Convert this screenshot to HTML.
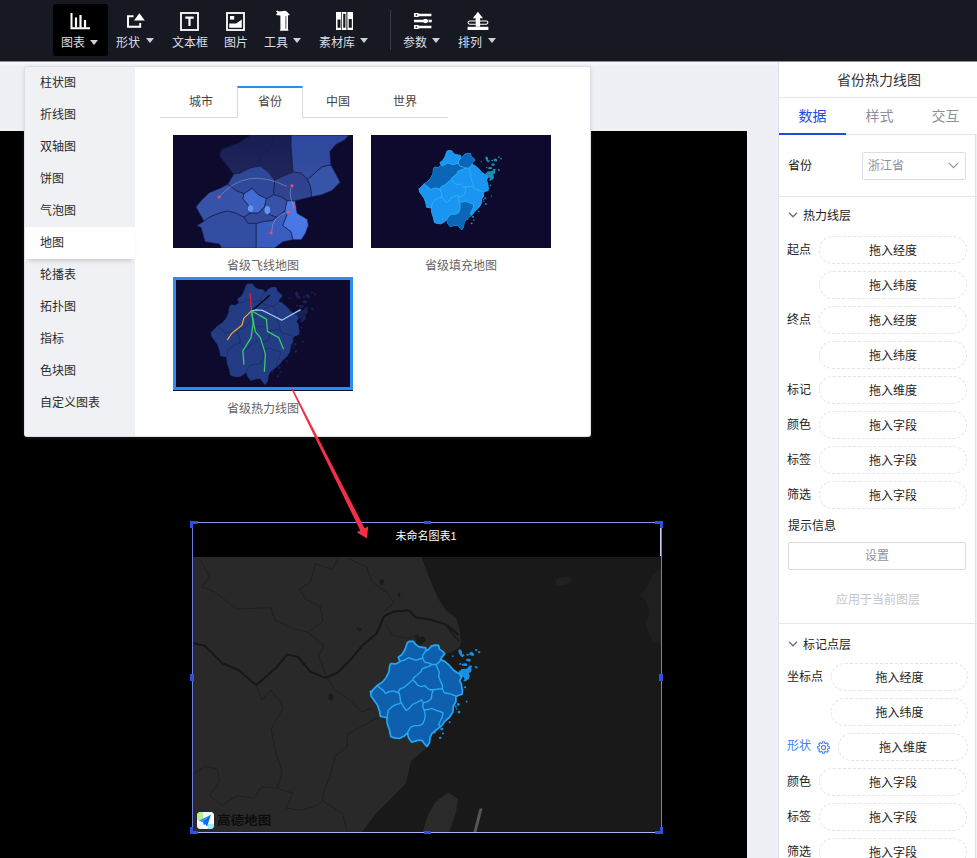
<!DOCTYPE html>
<html lang="zh-CN">
<head>
<meta charset="utf-8">
<title>省份热力线图</title>
<style>
*{box-sizing:border-box;margin:0;padding:0}
html,body{width:977px;height:858px;overflow:hidden}
body{position:relative;background:#eff0f5;font-family:"Liberation Sans","Noto Sans CJK SC",sans-serif;font-size:12px;color:#333;line-height:1}
.abs{position:absolute}
/* toolbar */
#toolbar{position:absolute;left:0;top:0;width:977px;height:61px;background:#161822;z-index:5}
.tb-sel{position:absolute;left:53px;top:4px;width:55px;height:52px;background:#000;border-radius:3px}
.tbi{position:absolute;top:0;height:61px;color:#dddee3;font-size:12px;white-space:nowrap}
.tbi .lbl{position:absolute;top:36px;left:0;line-height:14px;height:14px}
.tbi .car{position:absolute;top:38px;width:0;height:0;border-left:4px solid transparent;border-right:4px solid transparent;border-top:5px solid #cfd1d6}
#toolbar>svg{position:absolute}
.tb-sep{position:absolute;left:390px;top:10px;width:1px;height:40px;background:#3a3c47}
/* canvas */
#canvas{position:absolute;left:0;top:131px;width:747px;height:727px;background:#000}
/* popup */
#popup{position:absolute;left:25px;top:67px;width:565px;height:369px;background:#fff;border-radius:2px;box-shadow:0 0 0 1px #dfe0e5,0 1px 4px rgba(120,120,130,.35);z-index:4;overflow:hidden}
#menu{position:absolute;left:0;top:0;width:110px;height:370px;background:#f0f1f5}
#menu .mi{position:absolute;left:0;width:110px;height:32px;line-height:33px;padding-left:15px;font-size:12px;color:#2b2b2b}
#menu .mi.on{background:#fff;box-shadow:0 4px 5px -3px rgba(0,0,0,.22)}
.ptab{position:absolute;top:27px;height:18px;line-height:18px;font-size:12px;color:#444;width:60px;text-align:center}
.cap{position:absolute;font-size:12px;color:#666;width:180px;text-align:center;line-height:14px}
/* right panel */
#panel{position:absolute;left:778px;top:61px;width:199px;height:797px;background:#fff;border-left:1px solid #e1e3ec}
#panel .ttl{position:absolute;left:0;top:0;padding-left:2px;width:198px;height:37px;line-height:39px;text-align:center;font-size:14px;color:#333;border-bottom:1px solid #e4e6ee}
#panel .tab{position:absolute;top:37px;height:36px;line-height:37px;text-align:center;font-size:14px;color:#8a8f99;width:67px}
#panel .tab.on{color:#2449e0}
.lab{position:absolute;left:8px;margin-top:0;font-size:12px;line-height:14px;color:#222;white-space:nowrap}
.pill{position:absolute;height:28px;border:1px dashed #e2e3eb;border-radius:14px;text-align:center;line-height:28px;font-size:12px;color:#222}
.hr{position:absolute;left:0;width:198px;height:1px;background:#e4e6ee}
.sec{position:absolute;left:24px;font-size:12px;line-height:14px;color:#222}
.chev{position:absolute;left:9px;margin-top:-1px;width:10px;height:6px}
.hd{position:absolute;background:#2f4fe6}
</style>
</head>
<body>
<!--DEFS0--><svg width="0" height="0" style="position:absolute"><defs>
<path id="zjo" d="M371.4 692.7 L372.4 690.3 L377.3 685.4 L382.2 682.3 L385.9 678.0 L389.0 671.8 L389.6 666.3 L390.8 663.5 L395.7 663.9 L400.0 661.4 L398.2 657.1 L401.8 654.7 L404.9 649.7 L407.4 642.4 L409.2 641.4 L413.5 641.4 L415.4 644.2 L418.4 646.7 L422.7 647.3 L425.8 647.9 L425.8 651.0 L428.9 649.1 L431.3 646.1 L435.0 645.1 L438.7 645.4 L439.3 649.1 L443.0 651.6 L444.8 654.0 L441.8 657.1 L440.5 659.6 L444.8 661.4 L449.7 665.7 L453.4 670.0 L457.1 672.5 L460.2 674.3 L461.4 677.4 L459.6 680.4 L461.4 684.1 L462.0 689.0 L462.6 690.0 L462.0 694.3 L458.3 695.5 L455.9 696.8 L455.9 701.7 L453.4 706.0 L452.8 712.1 L449.7 717.0 L444.8 721.3 L441.8 725.6 L438.7 728.1 L435.6 730.5 L431.9 733.6 L430.1 737.3 L429.5 742.8 L427.0 746.5 L424.6 744.0 L422.1 740.4 L417.8 740.4 L411.7 742.2 L408.6 737.9 L407.4 733.0 L404.3 736.1 L399.4 738.5 L394.5 737.9 L390.8 736.7 L389.6 730.5 L387.1 723.2 L386.9 717.6 L383.4 717.0 L380.4 716.4 L379.5 710.9 L377.3 704.7 L374.2 700.4 L371.1 696.1 L370.5 691.2Z"/>
<path id="zji" d="M400.0 661.4 L404.3 660.2 L408.6 657.7 L412.3 659.0 L416.0 660.2 L419.7 659.0 L422.7 658.3 M422.7 658.3 L422.7 655.3 L425.8 651.0 M422.7 658.3 L424.6 662.0 L428.9 663.2 L431.9 664.5 L436.2 664.5 L439.9 661.4 L440.5 659.6 M431.9 664.5 L428.9 666.3 L425.2 667.5 L422.1 668.8 L420.9 671.8 L416.6 675.5 L413.5 678.0 L412.9 679.8 M436.2 664.5 L437.5 668.2 L439.3 671.8 L438.7 676.8 L440.5 681.1 L442.4 685.4 L442.4 689.0 M412.9 679.8 L415.4 682.3 L417.8 685.4 L421.5 686.6 L424.6 685.4 L427.0 687.8 L429.5 689.7 L433.8 689.7 L438.7 689.0 L442.4 689.0 M442.4 689.0 L444.2 692.7 L449.7 693.7 L455.9 696.1 M377.3 685.4 L379.7 687.8 L383.4 690.3 L385.3 693.3 L389.6 691.5 L393.9 690.9 L397.5 692.7 L400.0 689.0 L404.3 687.2 L408.6 683.5 L412.9 679.8 M397.5 692.7 L398.8 692.5 L400.0 696.8 L400.6 701.7 L400.0 703.5 L395.7 704.7 L391.4 707.2 L388.3 710.3 L386.9 717.6 M400.6 701.7 L403.1 706.0 L406.1 710.3 L409.2 708.4 L412.9 704.1 L417.2 702.3 L421.5 699.8 L423.3 702.9 M429.5 689.7 L433.2 690.0 L431.9 693.7 L431.3 698.6 L427.6 701.7 L423.3 702.9 M423.3 702.9 L422.7 706.6 L424.0 709.7 L427.6 709.7 L431.9 708.4 L436.2 710.3 L439.9 711.5 L443.0 712.7 L442.4 716.4 L440.5 720.7 L438.7 724.4 L439.9 726.8 M424.0 709.7 L425.2 714.6 L424.6 719.5 L422.7 723.8 L419.0 725.6 L414.7 725.6 L411.1 726.8 L408.6 730.5 L407.4 733.0"/>
<g id="zjs"><ellipse cx="460.2" cy="651.6" rx="1.6" ry="2.4" transform="rotate(-35 460.2 651.6)"/><ellipse cx="463.3" cy="655.3" rx="1.1" ry="1.0" transform="rotate(0 463.3 655.3)"/><ellipse cx="467.6" cy="654.7" rx="1.3" ry="1.0" transform="rotate(0 467.6 654.7)"/><ellipse cx="471.9" cy="653.4" rx="2.0" ry="1.2" transform="rotate(30 471.9 653.4)"/><ellipse cx="476.2" cy="650.0" rx="1.3" ry="0.9" transform="rotate(0 476.2 650.0)"/><ellipse cx="479.2" cy="652.2" rx="1.3" ry="1.0" transform="rotate(30 479.2 652.2)"/><ellipse cx="468.8" cy="660.2" rx="1.9" ry="1.3" transform="rotate(20 468.8 660.2)"/><ellipse cx="465.1" cy="664.5" rx="2.2" ry="1.2" transform="rotate(0 465.1 664.5)"/><ellipse cx="460.2" cy="663.9" rx="1.0" ry="0.9" transform="rotate(0 460.2 663.9)"/><ellipse cx="463.3" cy="670.6" rx="2.8" ry="1.6" transform="rotate(10 463.3 670.6)"/><ellipse cx="467.6" cy="671.8" rx="1.7" ry="2.7" transform="rotate(0 467.6 671.8)"/><ellipse cx="462.0" cy="675.5" rx="2.2" ry="1.3" transform="rotate(-20 462.0 675.5)"/><ellipse cx="465.7" cy="679.8" rx="2.5" ry="1.2" transform="rotate(-30 465.7 679.8)"/><ellipse cx="460.2" cy="671.8" rx="1.4" ry="1.2" transform="rotate(0 460.2 671.8)"/><ellipse cx="476.2" cy="667.2" rx="1.6" ry="1.0" transform="rotate(30 476.2 667.2)"/><ellipse cx="470.6" cy="666.3" rx="1.7" ry="0.8" transform="rotate(10 470.6 666.3)"/><ellipse cx="452.8" cy="656.1" rx="0.8" ry="0.9" transform="rotate(0 452.8 656.1)"/><ellipse cx="465.1" cy="687.2" rx="1.1" ry="1.0" transform="rotate(0 465.1 687.2)"/><ellipse cx="459.6" cy="677.4" rx="1.3" ry="1.5" transform="rotate(0 459.6 677.4)"/><ellipse cx="458.3" cy="704.5" rx="1.4" ry="1.4"/><ellipse cx="455.9" cy="706.6" rx="1.0" ry="1.0"/><ellipse cx="459.0" cy="712.1" rx="1.4" ry="1.4"/><ellipse cx="466.7" cy="701.7" rx="0.9" ry="0.9"/><ellipse cx="449.7" cy="722.2" rx="1.0" ry="1.0"/><ellipse cx="439.9" cy="725.0" rx="1.4" ry="1.4"/><ellipse cx="441.8" cy="729.1" rx="1.6" ry="1.3"/><ellipse cx="443.0" cy="733.6" rx="1.1" ry="1.0"/><ellipse cx="440.2" cy="737.9" rx="1.3" ry="1.1"/><ellipse cx="435.0" cy="732.7" rx="1.0" ry="0.8"/><ellipse cx="456.5" cy="709.0" rx="0.8" ry="0.8"/><ellipse cx="464.2" cy="671.4" rx="4.9" ry="2.3" transform="rotate(-20 464.2 671.4)"/><ellipse cx="466.7" cy="676.3" rx="2.9" ry="3.6" transform="rotate(0 466.7 676.3)"/><ellipse cx="461" cy="654.3" rx="1.3" ry="3.3" transform="rotate(-35 461 654.3)"/><ellipse cx="471.6" cy="654.3" rx="2.6" ry="1.3" transform="rotate(20 471.6 654.3)"/><ellipse cx="468.3" cy="660" rx="2.3" ry="1.3" transform="rotate(0 468.3 660)"/><ellipse cx="464.2" cy="664.9" rx="2.9" ry="1.0" transform="rotate(10 464.2 664.9)"/><ellipse cx="462.8" cy="674.5" rx="3" ry="2.8" transform="rotate(0 462.8 674.5)"/><ellipse cx="469.5" cy="669.5" rx="2" ry="3.2" transform="rotate(0 469.5 669.5)"/></g>
</defs></svg><!--DEFS1-->
<!-- TOOLBAR -->
<div id="toolbar">
  <div class="tb-sel"></div>
  <div class="tbi" style="left:61px"><span class="lbl">图表</span><i class="car" style="left:29px;top:40px"></i></div>
  <div class="tbi" style="left:116px"><span class="lbl">形状</span><i class="car" style="left:30px"></i></div>
  <div class="tbi" style="left:172px"><span class="lbl">文本框</span></div>
  <div class="tbi" style="left:224px"><span class="lbl">图片</span></div>
  <div class="tbi" style="left:264px"><span class="lbl">工具</span><i class="car" style="left:29px"></i></div>
  <div class="tbi" style="left:319px"><span class="lbl">素材库</span><i class="car" style="left:41px"></i></div>
  <div class="tb-sep"></div>
  <div class="tbi" style="left:403px"><span class="lbl">参数</span><i class="car" style="left:29px"></i></div>
  <div class="tbi" style="left:458px"><span class="lbl">排列</span><i class="car" style="left:30px"></i></div>

  <svg style="left:70px;top:12px" width="21" height="18" viewBox="0 0 21 18"><path d="M1.5 1v15.2h18.5" fill="none" stroke="#fff" stroke-width="2"/><path d="M6 5.5v10M10.5 3v12.5M15 8v7.5" fill="none" stroke="#fff" stroke-width="2.2"/></svg>
  <svg style="left:126px;top:12px" width="20" height="17" viewBox="0 0 20 17"><path d="M7.5 4.2H2v10.6h12.2V11" fill="none" stroke="#fff" stroke-width="1.9"/><path d="M13.4 1.2 L18.8 8.6 H8 Z" fill="#fff"/></svg>
  <svg style="left:180px;top:12px" width="19" height="19" viewBox="0 0 19 19"><rect x="1" y="1" width="17" height="17" fill="none" stroke="#fff" stroke-width="1.8"/><path d="M5.3 5.6h8.4M9.5 5.6v8.4" fill="none" stroke="#fff" stroke-width="2.2"/></svg>
  <svg style="left:226px;top:12px" width="19" height="19" viewBox="0 0 19 19"><rect x="1" y="1" width="17" height="17" fill="none" stroke="#fff" stroke-width="1.8"/><path d="M3.2 15.8 H15.8 V7.4 L10.2 11.6 H3.2 Z" fill="#fff"/><rect x="4" y="4" width="4.2" height="3.6" fill="#fff"/></svg>
  <svg style="left:276px;top:10px" width="15" height="22" viewBox="0 0 15 22"><path d="M0 1.2 L1.5 0.6 L3.2 1.6 L9.2 0.8 L11 1.8 L13.6 4.6 L13.6 5.3 L12 5.3 L12 19 L12.5 20.8 L3.8 20.8 L4.4 19 L4.4 5.5 L1 5.3 L0 4.2 L1.6 3 Z" fill="#fff"/><path d="M9.9 6.2v12.6" stroke="#4a3a5a" stroke-width="0.9"/></svg>
  <svg style="left:336px;top:12px" width="18" height="18" viewBox="0 0 18 18"><path d="M0 0h5.3v18H0zM6 0h4.4v18H6zM11.4 0h5.6v18h-5.6z" fill="#fff"/><path d="M1.5 7.4h3v8.4h-3zM7.2 1.8h2.2v14h-2.2zM12.7 6.9h3.1v8.9h-3.1z" fill="#161822"/></svg>
  <svg style="left:413px;top:12px" width="20" height="18" viewBox="0 0 20 18"><path d="M5 3H18.4M1 9H18.8M5 15H18.4" stroke="#fff" stroke-width="2.4" fill="none"/><path d="M1 1h4.6v4H1zM1 13h4.6v4H1z" fill="#fff"/><path d="M2.7 2.3h1.5v1.4H2.7zM2.7 14.3h1.5v1.4H2.7z" fill="#161822"/><circle cx="12.4" cy="9" r="2.3" fill="#fff"/><path d="M15.6 8.4v1.2" stroke="#161822" stroke-width="1"/></svg>
  <svg style="left:467px;top:11px" width="22" height="20" viewBox="0 0 22 20"><rect x="1.1" y="10" width="19.8" height="3.2" rx="1.6" fill="none" stroke="#fff" stroke-width="1.1"/><path d="M10.9 0.8 L16 7.2 H13.1 V15.8 H8.7 V7.2 H5.8 Z" fill="#fff"/><path d="M0.6 15.8H21.4V19H0.6Z" fill="#fff"/></svg>

</div>

<div class="abs" style="left:0;top:61px;width:977px;height:1px;background:#8d8e94;z-index:6"></div><div class="abs" style="left:0;top:62px;width:778px;height:5px;background:linear-gradient(#fbfbfc,#eeeff3)"></div>
<!-- CANVAS -->
<div id="canvas">
<!--CHART0-->
<div class="abs" style="left:192px;top:391px;width:470px;height:35px;background:#000;color:#fff;font-size:11px;line-height:14px;text-align:center;padding-top:7px;padding-right:2px">未命名图表1</div>
<svg class="abs" style="left:192px;top:426px" width="469" height="275" viewBox="192 557 469 275">
<rect x="192" y="556" width="469" height="276" fill="#191919"/>
<path d="M192.0 556.0 L421.0 556.0 L431.5 583.0 L438.0 598.6 L447.0 611.4 L456.0 617.8 L459.7 629.3 L461.0 641.0 L459.6 647.0 L452.0 652.0 L444.8 654.0 L430.0 700.0 L429.0 746.0 L411.0 761.0 L406.0 783.0 L391.5 798.0 L376.7 812.8 L362.0 832.0 L192.0 832.0Z" fill="#292929"/>
<path d="M661.0 568.0 L652.0 575.0 L648.0 585.0 L640.0 595.0 L645.0 600.0 L650.0 612.0 L646.0 625.0 L652.0 640.0 L661.0 645.0Z" fill="#1f1f1f"/>
<ellipse cx="563.5" cy="581" rx="8.5" ry="4" fill="#212121" transform="rotate(-12 563.5 581)"/>
<path d="M422.6 832.0 L428.0 815.0 L435.0 802.6 L448.0 792.4 L458.4 798.7 L455.8 812.8 L449.4 832.0Z" fill="#2a2a2a"/>
<path d="M473.5 832 L479.5 808.5 L482.5 808.5 L476.5 832Z" fill="#565656"/>
<g fill="none" stroke="#1f1f1f" stroke-width="1" stroke-linejoin="round"><path d="M199.8 558.6 L209.7 577.0 L202.0 586.9 L214.6 591.8 L236.7 609.0 L271.0 607.7 L274.8 620.0 L293.2 628.6 L308.0 632.3 L322.7 621.3 L320.2 606.5 L305.5 599.0 L299.3 589.3 L310.4 582.0 L315.3 563.5 L332.5 569.7 L337.4 558.6"/><path d="M308.0 632.3 L324.0 645.8 L319.0 655.7 L326.4 676.5"/><path d="M347.2 558.0 L367.0 567.2 L371.8 582.0 L386.6 591.8 L394.0 602.8 L384.0 611.4"/><path d="M385.3 625.0 L394.0 636.0 L408.7 638.5 L418.5 634.8"/><path d="M271.0 690.0 L283.4 707.2 L271.0 729.3 L276.0 753.9 L282.0 771.0 L277.2 788.3 L293.2 793.2 L285.8 808.0 L300.6 810.4 L317.8 805.5 L322.7 800.6 L342.3 812.9 L347.2 831.3"/><path d="M379.2 717.0 L347.2 734.2 L347.2 746.5 L335.0 756.3 L330.0 776.0 L322.7 795.7 L322.7 800.6"/><path d="M193.7 773.5 L204.7 766.2 L217.0 768.6 L219.5 780.9 L209.7 795.7 L222.0 805.5 L236.7 795.7 L253.9 798.0 L261.3 787.0 L277.2 788.3"/><path d="M326.4 676.5 L335.0 690.0 L350.0 700.0 L362.0 712.0 L372.0 708.0"/><path d="M256.3 685.0 L262.0 700.0 L271.0 690.0"/></g>
<path d="M192.0 643.0 L204.7 645.8 L222.0 663.0 L239.0 670.4 L256.3 685.0 L276.0 668.0 L287.0 654.4 L298.0 657.0 L310.4 671.6 L325.0 677.8 L337.4 672.9 L352.0 658.0 L362.0 645.8 L376.7 633.5 L384.0 616.3 L394.0 611.4 L408.7 610.2 L416.0 617.6 L430.0 619.5 L445.6 624.4 L458.4 634.6" fill="none" stroke="#171717" stroke-width="2" stroke-linejoin="round"/>
<path d="M445.6 624.4 L452 633 L459 641" fill="none" stroke="#1b1b1b" stroke-width="1.5"/>
<g fill="#1b1b1b"><ellipse cx="421" cy="640.5" rx="5" ry="3.6" transform="rotate(-25 421 640.5)"/><ellipse cx="417" cy="637" rx="2" ry="2.5"/><ellipse cx="359" cy="629" rx="3" ry="1.3" transform="rotate(20 359 629)"/><ellipse cx="331" cy="697" rx="2.5" ry="3.5"/><ellipse cx="381.6" cy="582" rx="2" ry="3"/><ellipse cx="399" cy="595" rx="1.5" ry="2.5"/></g>
<use href="#zjs" fill="#1a8fe0"/>
<use href="#zjo" fill="#0e5fae" stroke="#24a8f3" stroke-width="1.7" stroke-linejoin="round"/>
<use href="#zji" fill="none" stroke="#24a8f3" stroke-width="1.4" stroke-linejoin="round" stroke-linecap="round"/>
</svg>
<div class="abs" style="left:192px;top:391px;width:470px;height:311px;border:1px solid #6c7edc;border-top-color:#8493e0;border-bottom-color:#a9b3ee"></div>
<div class="abs" style="left:660px;top:392px;width:1px;height:33px;background:#c9cdf0"></div>
<i class="hd" style="left:190px;top:390px;width:8px;height:3px"></i><i class="hd" style="left:190px;top:390px;width:3px;height:7px"></i>
<i class="hd" style="left:655px;top:390px;width:8px;height:3px"></i><i class="hd" style="left:660px;top:390px;width:3px;height:7px"></i>
<i class="hd" style="left:190px;top:700px;width:8px;height:3px"></i><i class="hd" style="left:190px;top:696px;width:3px;height:7px"></i>
<i class="hd" style="left:655px;top:700px;width:8px;height:3px"></i><i class="hd" style="left:660px;top:696px;width:3px;height:7px"></i>
<i class="hd" style="left:424px;top:390px;width:7px;height:3px"></i>
<i class="hd" style="left:424px;top:700px;width:7px;height:3px"></i>
<i class="hd" style="left:190px;top:543px;width:4px;height:7px"></i>
<i class="hd" style="left:659px;top:543px;width:4px;height:7px"></i>
<div class="abs" style="left:197px;top:681px;width:17px;height:17px;border-radius:4px;background:#fff;overflow:hidden"><svg width="17" height="17" viewBox="0 0 18 18"><rect x="0" y="0" width="6.5" height="9" fill="#b9ee92"/><rect x="6.5" y="0" width="11.5" height="4" fill="#eef6f2"/><rect x="11" y="12.5" width="7" height="5.5" fill="#a5e6ff"/><rect x="0" y="12" width="7" height="6" fill="#eaf3f6"/><path d="M14.6 2.8 L1.8 9.2 L6.4 10.8 L10.6 15 Z" fill="#2a93ff"/><path d="M14.6 2.8 L6.4 10.8 L7.4 14 L9 12.2 L10.6 15 Z" fill="#0a6cf2"/></svg></div>
<div class="abs" style="left:217px;top:683px;font-size:12px;line-height:14px;font-weight:bold;color:#0c0c0c;transform:scaleX(1.13);transform-origin:0 0;white-space:nowrap">高德地图</div>
<!--CHART1-->
</div>

<!-- POPUP -->
<div id="popup">
  <div id="menu">
    <div class="mi" style="top:0">柱状图</div>
    <div class="mi" style="top:32px">折线图</div>
    <div class="mi" style="top:64px">双轴图</div>
    <div class="mi" style="top:96px">饼图</div>
    <div class="mi" style="top:128px">气泡图</div>
    <div class="mi on" style="top:160px">地图</div>
    <div class="mi" style="top:192px">轮播表</div>
    <div class="mi" style="top:224px">拓扑图</div>
    <div class="mi" style="top:256px">指标</div>
    <div class="mi" style="top:288px">色块图</div>
    <div class="mi" style="top:320px">自定义图表</div>
  </div>
  <div class="abs" style="left:-1px;top:-1px;width:566px;height:371px">
  <div class="abs" style="left:136px;top:51px;width:288px;height:1px;background:#d8d9dd"></div>
  <div class="abs" style="left:213px;top:20px;width:66px;height:32px;background:#fff;border:1px solid #d8d9dd;border-bottom:none;border-top:2px solid #2d8cf0"></div>
  <div class="ptab" style="left:147px">城市</div>
  <div class="ptab" style="left:216px">省份</div>
  <div class="ptab" style="left:284px">中国</div>
  <div class="ptab" style="left:351px">世界</div>
  <!--TH0--><svg class="abs" style="left:149px;top:69px" width="180" height="113" viewBox="63 49 880 551" preserveAspectRatio="none">
<defs><linearGradient id="g1" x1="0" y1="0" x2="0" y2="1"><stop offset="0" stop-color="#fff" stop-opacity="0"/><stop offset="1" stop-color="#5b8cff" stop-opacity=".12"/></linearGradient><clipPath id="c1"><path d="M440 49 L640 49 L640 100 L650 230 L600 250 L560 270 L530 230 L490 200 L440 210 L390 235 L360 240 L330 200 L290 150 L300 120 L380 90 L430 60Z M640 49 L925 49 L900 75 L860 95 L830 130 L835 195 L790 205 L740 250 L720 265 L690 235 L650 230 L640 100Z M835 195 L860 240 L880 280 L840 320 L790 340 L740 350 L735 300 L720 265 L740 250 L790 205Z M360 240 L390 235 L440 210 L490 200 L530 230 L560 270 L555 340 L520 360 L480 340 L450 310 L410 335 L370 320 L330 290Z M560 270 L600 250 L650 230 L690 235 L720 265 L735 300 L740 350 L700 360 L660 370 L620 370 L590 350 L555 340Z M330 290 L370 320 L410 335 L405 360 L430 390 L440 430 L410 450 L370 430 L330 420 L290 430 L240 450 L215 470 L175 400 L200 370 L240 330 L290 310Z M410 335 L450 310 L480 340 L520 360 L510 400 L480 430 L440 430 L430 390 L405 360Z M520 360 L555 340 L590 350 L620 370 L610 420 L570 450 L540 440 L510 400Z M215 470 L240 450 L290 430 L330 420 L370 430 L410 450 L430 480 L470 480 L470 600 L300 600 L290 580 L220 570 L200 500 L180 490Z M470 480 L510 470 L550 465 L570 450 L610 420 L620 440 L600 490 L640 520 L650 560 L600 570 L560 600 L470 600Z M620 370 L660 370 L665 400 L670 430 L720 460 L725 490 L710 530 L690 560 L650 560 L640 520 L600 490 L620 440 L610 420Z M410 450 L440 430 L480 430 L510 400 L540 440 L570 450 L550 465 L510 470 L470 480 L430 480Z"/></clipPath></defs>
<rect x="63" y="49" width="880" height="551" fill="#0d0a2e"/>
<g stroke="#141a48" stroke-width="4" stroke-linejoin="round">
<path d="M440 49 L640 49 L640 100 L650 230 L600 250 L560 270 L530 230 L490 200 L440 210 L390 235 L360 240 L330 200 L290 150 L300 120 L380 90 L430 60Z" fill="#181d52"/>
<path d="M640 49 L925 49 L900 75 L860 95 L830 130 L835 195 L790 205 L740 250 L720 265 L690 235 L650 230 L640 100Z" fill="#2c479c"/>
<path d="M835 195 L860 240 L880 280 L840 320 L790 340 L740 350 L735 300 L720 265 L740 250 L790 205Z" fill="#314fa4"/>
<path d="M360 240 L390 235 L440 210 L490 200 L530 230 L560 270 L555 340 L520 360 L480 340 L450 310 L410 335 L370 320 L330 290Z" fill="#284294"/>
<path d="M560 270 L600 250 L650 230 L690 235 L720 265 L735 300 L740 350 L700 360 L660 370 L620 370 L590 350 L555 340Z" fill="#273b8a"/>
<path d="M330 290 L370 320 L410 335 L405 360 L430 390 L440 430 L410 450 L370 430 L330 420 L290 430 L240 450 L215 470 L175 400 L200 370 L240 330 L290 310Z" fill="#2e4ba2"/>
<path d="M410 335 L450 310 L480 340 L520 360 L510 400 L480 430 L440 430 L430 390 L405 360Z" fill="#3c66d0"/>
<path d="M520 360 L555 340 L590 350 L620 370 L610 420 L570 450 L540 440 L510 400Z" fill="#2f4ba2"/>
<path d="M215 470 L240 450 L290 430 L330 420 L370 430 L410 450 L430 480 L470 480 L470 600 L300 600 L290 580 L220 570 L200 500 L180 490Z" fill="#2c4498"/>
<path d="M470 480 L510 470 L550 465 L570 450 L610 420 L620 440 L600 490 L640 520 L650 560 L600 570 L560 600 L470 600Z" fill="#3355b6"/>
<path d="M620 370 L660 370 L665 400 L670 430 L720 460 L725 490 L710 530 L690 560 L650 560 L640 520 L600 490 L620 440 L610 420Z" fill="#4472e0"/>
<path d="M410 450 L440 430 L480 430 L510 400 L540 440 L570 450 L550 465 L510 470 L470 480 L430 480Z" fill="#2a4092"/>
</g>
<path d="M560 49 L545 110 L490 150 L485 200" fill="none" stroke="#141a48" stroke-width="4"/>
<g clip-path="url(#c1)"><rect x="63" y="49" width="880" height="551" fill="url(#g1)"/></g>
<ellipse cx="442" cy="408" rx="13" ry="17" fill="#6094ee"/><ellipse cx="524" cy="415" rx="14" ry="20" fill="#6094ee"/>
<g fill="none" stroke="#c8cfe6" stroke-width="3.4" stroke-opacity=".5"><path d="M290 350 Q420 200 620 300"/><path d="M640 305 Q628 350 655 398"/><path d="M545 525 Q545 440 628 425"/></g>
<g fill="#f04a6e"><circle cx="288" cy="351" r="7.5"/><circle cx="645" cy="297" r="7.5"/><circle cx="655" cy="400" r="7.5"/><circle cx="630" cy="425" r="7.5"/><circle cx="542" cy="527" r="7.5"/></g>
</svg>
<svg class="abs" style="left:347px;top:69px" width="180" height="113" viewBox="371 135 180 113">
<rect x="371" y="135" width="180" height="113" fill="#0d0a2e"/>
<g transform="translate(139.3 -333.7) scale(0.755)">
<use href="#zjs" fill="#25c8ea" opacity=".7"/>
<use href="#zjo" fill="#1a95f2" stroke="#22a8f8" stroke-width="1.2" stroke-linejoin="round"/>
<path d="M377.3 685.4 L382.2 682.3 L385.9 678.0 L389.0 671.8 L389.6 666.3 L390.8 663.5 L395.7 663.9 L400.0 661.4 L404.3 660.2 L408.6 657.7 L412.3 659.0 L416.0 660.2 L419.7 659.0 L422.7 658.3 L424.6 662.0 L428.9 663.2 L431.9 664.5 L428.9 666.3 L425.2 667.5 L422.1 668.8 L420.9 671.8 L416.6 675.5 L413.5 678.0 L412.9 679.8 L408.6 683.5 L404.3 687.2 L400.0 689.0 L397.5 692.7 L393.9 690.9 L389.6 691.5 L385.3 693.3 L383.4 690.3 L379.7 687.8Z" fill="#0a66b6"/><path d="M422.7 658.3 L422.7 655.3 L425.8 651.0 L428.9 649.1 L431.3 646.1 L435.0 645.1 L438.7 645.4 L439.3 649.1 L443.0 651.6 L444.8 654.0 L441.8 657.1 L440.5 659.6 L439.9 661.4 L436.2 664.5 L431.9 664.5 L428.9 663.2 L424.6 662.0Z" fill="#0a66b6"/><path d="M424.0 709.7 L427.6 709.7 L431.9 708.4 L436.2 710.3 L439.9 711.5 L443.0 712.7 L442.4 716.4 L440.5 720.7 L438.7 724.4 L439.9 726.8 L435.6 730.5 L431.9 733.6 L430.1 737.3 L429.5 742.8 L427.0 746.5 L424.6 744.0 L422.1 740.4 L417.8 740.4 L411.7 742.2 L408.6 737.9 L407.4 733.0 L408.6 730.5 L411.1 726.8 L414.7 725.6 L419.0 725.6 L422.7 723.8 L424.6 719.5 L425.2 714.6Z" fill="#0a66b6"/>
<use href="#zji" fill="none" stroke="#2bb4fb" stroke-width="1.2" stroke-linejoin="round"/>
</g></svg>
<svg class="abs" style="left:149px;top:211px" width="180" height="114" viewBox="173 277 180 114">
<rect x="173" y="277" width="180" height="114" fill="#0d0a2e"/>
<g transform="translate(-142.6 -328.5) scale(0.955)">
<use href="#zjs" fill="#1e3474" opacity=".6"/>
<use href="#zjo" fill="#233c84" stroke="#233c84" stroke-width="1" stroke-linejoin="round"/>
<use href="#zji" fill="none" stroke="#182a64" stroke-width="0.7" stroke-linejoin="round"/>
</g>
<g fill="none" stroke-width="1.3" stroke-linejoin="round" stroke-linecap="round">
<path d="M251.5 310.9 L269.5 295.6" stroke="#050505"/>
<path d="M250.1 293.5 L251.5 310.9" stroke="#e02238"/>
<path d="M251.5 310.9 L256.2 309.9 L262.4 310.3 L271.6 315.0 L281.8 320.2 L291.0 315.0 L300.2 309.9" stroke="#9ccaff"/>
<path d="M251.5 310.9 L243.9 318.1 L241.9 325.3 L231.6 333.5 L227.6 339.6" stroke="#f0a232"/>
<path d="M251.5 310.9 L253.1 323.2 L251.1 337.6 L242.9 350.9 L243.9 364.2" stroke="#3dc86a"/>
<path d="M251.5 310.9 L255.2 331.4 L260.3 337.6 L265.4 353.9 L264.4 371.3" stroke="#3dc86a"/>
<path d="M251.5 310.9 L266.4 319.1 L267.5 331.4 L278.7 337.6 L283.4 348.8" stroke="#3dc86a"/>
</g>
<rect x="174.5" y="278.5" width="177" height="110" fill="none" stroke="#2d8cf0" stroke-width="3"/>
<rect x="173" y="390" width="180" height="1" fill="#10123a"/>
</svg><!--TH1-->
  <div class="cap" style="left:149px;top:193px">省级飞线地图</div>
  <div class="cap" style="left:347px;top:193px">省级填充地图</div>
  <div class="cap" style="left:149px;top:336px">省级热力线图</div>
  </div>
</div>

<!-- RIGHT PANEL -->
<div id="panel">
  <div class="ttl">省份热力线图</div>
  <div class="tab on" style="left:0">数据</div>
  <div class="tab" style="left:67px">样式</div>
  <div class="tab" style="left:133px">交互</div>
  <div class="hr" style="top:73px;background:#e4e6ee"></div>
  <div class="abs" style="left:0;top:72px;width:67px;height:2px;background:#2449e0"></div>
  <div class="abs" style="left:196px;top:73px;width:2px;height:724px;background:#f2f2f5;border-left:1px solid #dfe0e6"></div>
  <div class="lab" style="top:98px;left:9px">省份</div>
  <div class="abs" style="left:83px;top:91px;width:104px;height:28px;border:1px solid #dcdde9;border-radius:2px;line-height:26px;padding-left:5px;font-size:12px;color:#8e929d">浙江省<svg class="abs" style="right:6px;top:9px" width="11" height="7" viewBox="0 0 11 7"><path d="M0.8 0.8 L5.5 5.6 L10.2 0.8" fill="none" stroke="#8e929d" stroke-width="1.1"/></svg></div>
  <div class="hr" style="top:135px"></div>
  <svg class="chev" style="top:152px" viewBox="0 0 10 6"><path d="M1 0.8 L5 4.8 L9 0.8" fill="none" stroke="#66718c" stroke-width="1.4"/></svg>
  <div class="sec" style="top:148px">热力线层</div>
  <div class="lab" style="top:182px">起点</div>
  <div class="pill" style="left:40px;top:175px;width:148px">拖入经度</div>
  <div class="pill" style="left:40px;top:210px;width:148px">拖入纬度</div>
  <div class="lab" style="top:252px">终点</div>
  <div class="pill" style="left:40px;top:245px;width:148px">拖入经度</div>
  <div class="pill" style="left:40px;top:280px;width:148px">拖入纬度</div>
  <div class="lab" style="top:322px">标记</div>
  <div class="pill" style="left:40px;top:315px;width:148px">拖入维度</div>
  <div class="lab" style="top:357px">颜色</div>
  <div class="pill" style="left:40px;top:350px;width:148px">拖入字段</div>
  <div class="lab" style="top:392px">标签</div>
  <div class="pill" style="left:40px;top:385px;width:148px">拖入字段</div>
  <div class="lab" style="top:427px">筛选</div>
  <div class="pill" style="left:40px;top:420px;width:148px">拖入字段</div>
  <div class="lab" style="top:458px;left:9px">提示信息</div>
  <div class="abs" style="left:9px;top:481px;width:178px;height:28px;border:1px solid #d9dae0;border-radius:2px;line-height:26px;text-align:center;font-size:12px;color:#8e929d">设置</div>
  <div class="abs" style="left:0;top:532px;width:198px;text-align:center;font-size:12px;line-height:14px;color:#c3c6cc">应用于当前图层</div>
  <div class="hr" style="top:562px"></div>
  <svg class="chev" style="top:581px" viewBox="0 0 10 6"><path d="M1 0.8 L5 4.8 L9 0.8" fill="none" stroke="#66718c" stroke-width="1.4"/></svg>
  <div class="sec" style="top:577px">标记点层</div>
  <div class="lab" style="top:609px">坐标点</div>
  <div class="pill" style="left:52px;top:602px;width:137px">拖入经度</div>
  <div class="pill" style="left:52px;top:637px;width:137px">拖入纬度</div>
  <div class="lab" style="top:678px;color:#3a84e6">形状</div>
  <svg class="abs" style="left:38px;top:680px" width="13" height="13" viewBox="0 0 13 13"><path d="M5.34 2.15 L5.50 0.69 L7.50 0.69 L7.66 2.15 L8.76 2.61 L9.91 1.68 L11.32 3.09 L10.39 4.24 L10.85 5.34 L12.31 5.50 L12.31 7.50 L10.85 7.66 L10.39 8.76 L11.32 9.91 L9.91 11.32 L8.76 10.39 L7.66 10.85 L7.50 12.31 L5.50 12.31 L5.34 10.85 L4.24 10.39 L3.09 11.32 L1.68 9.91 L2.61 8.76 L2.15 7.66 L0.69 7.50 L0.69 5.50 L2.15 5.34 L2.61 4.24 L1.68 3.09 L3.09 1.68 L4.24 2.61Z" fill="none" stroke="#3a84e6" stroke-width="1.05" stroke-linejoin="round"/><circle cx="6.5" cy="6.5" r="2.1" fill="none" stroke="#3a84e6" stroke-width="1.05"/></svg>
  <div class="pill" style="left:59px;top:672px;width:130px">拖入维度</div>
  <div class="lab" style="top:714px">颜色</div>
  <div class="pill" style="left:40px;top:707px;width:148px">拖入字段</div>
  <div class="lab" style="top:749px">标签</div>
  <div class="pill" style="left:40px;top:742px;width:148px">拖入字段</div>
  <div class="lab" style="top:784px">筛选</div>
  <div class="pill" style="left:40px;top:777px;width:148px">拖入字段</div>
</div>

<svg class="abs" style="left:280px;top:380px;z-index:6" width="100" height="170" viewBox="280 380 100 170">
<path d="M291.3 389.1 L292.7 388.4 L364.6 528.2 L368.2 526.4 L367 538.5 L356.8 532.2 L360.2 530.5 Z" fill="#f03044"/>
</svg>
</body>
</html>
